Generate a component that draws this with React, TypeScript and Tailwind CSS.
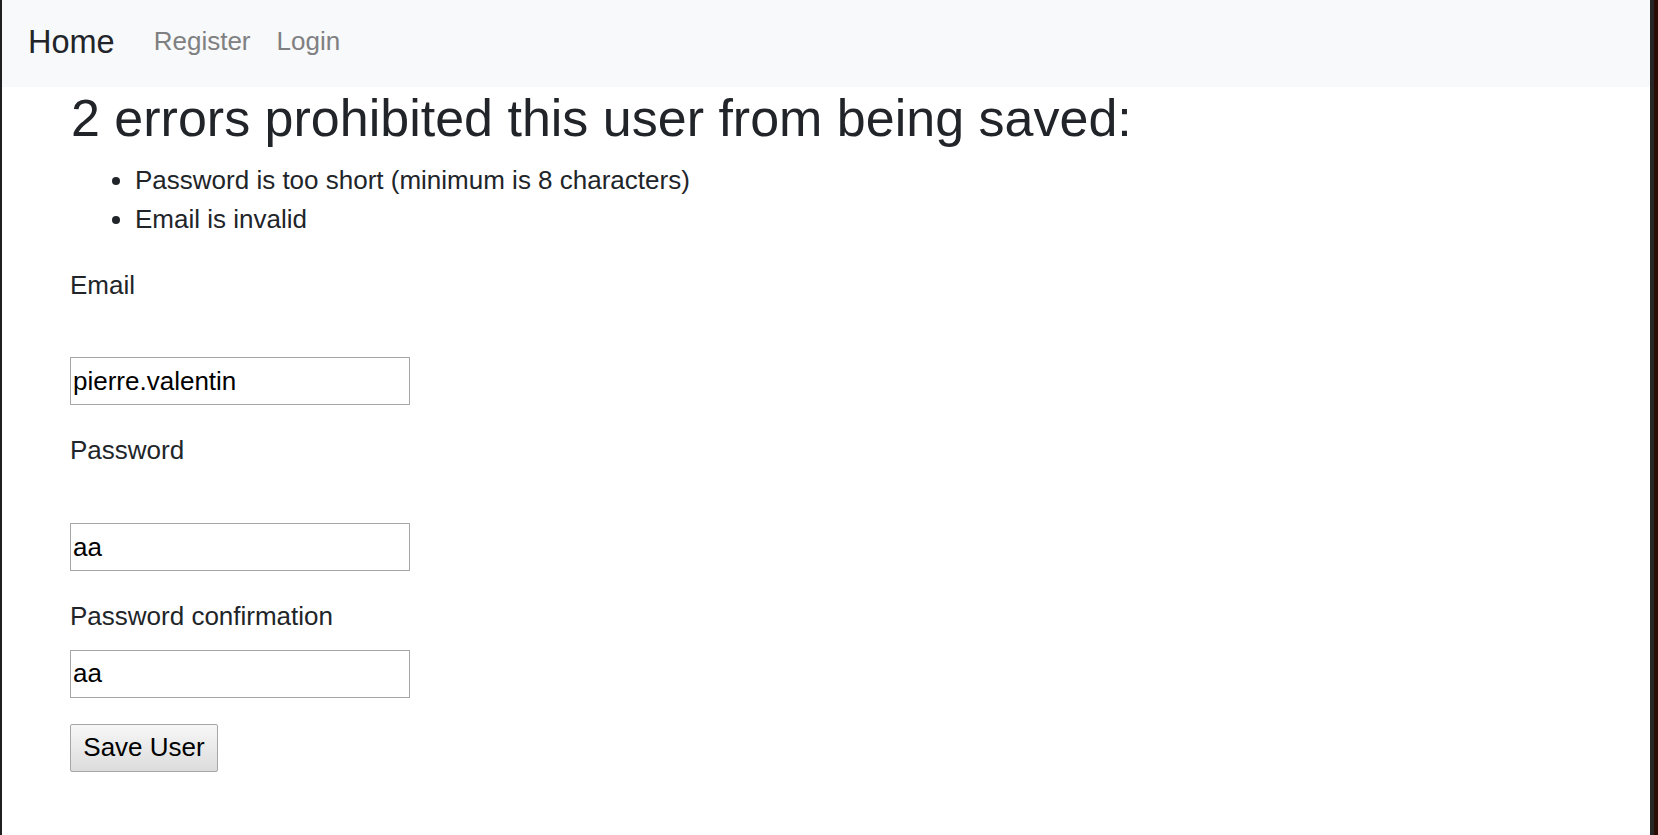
import React from 'react';

const fields = [
  { label: 'Email', value: 'pierre.valentin', error: true },
  { label: 'Password', value: 'aa', error: true },
  { label: 'Password confirmation', value: 'aa', error: false },
];

const errors = ['Password is too short (minimum is 8 characters)', 'Email is invalid'];

const App = () => {
  return (
    <div className="flex h-[835px] w-full font-['Liberation_Sans',Arial,sans-serif] text-[#212529]">
      {/* window edge */}
      <div className="w-[2px] bg-[#1f1f1f]" />

      <div className="flex-1 bg-white">
        {/* Navbar */}
        <nav className="flex h-[87px] items-center bg-[#f8f9fa] px-[26px]">
          <a className="mb-[3px] mr-[26px] text-[32.5px] leading-[48px] text-[#212529]">Home</a>
          <a className="mb-[5px] px-[13px] text-[26px] leading-[39px] text-[#7f8081]">Register</a>
          <a className="mb-[5px] px-[13px] text-[26px] leading-[39px] text-[#7f8081]">Login</a>
        </nav>

        <div className="pl-[68px]">
          <h2 className="mb-[11.5px] pl-[1px] text-[52px] font-normal leading-[1.2]">
            2 errors prohibited this user from being saved:
          </h2>
          <ul className="mb-[27px] list-disc pl-[65px] text-[26px] leading-[39px]">
            {errors.map((e) => (
              <li key={e}>{e}</li>
            ))}
          </ul>

          {/* Form */}
          <form className="flex flex-col items-start text-[26px]">
            {fields.map((f) => (
              <div key={f.label} className="mb-[26px] flex flex-col items-start">
                <label className="leading-[39px]">{f.label}</label>
                <input
                  type="text"
                  defaultValue={f.value}
                  className={`${f.error ? 'mt-[52.6px]' : 'mt-[13.8px]'} h-[48px] w-[340px] border border-[#a6a6a6] bg-white px-[2px] text-[26px] text-black outline-none`}
                />
              </div>
            ))}
            <button
              type="button"
              className="h-[48px] w-[148px] rounded-[2px] border border-[#a6a6a6] bg-gradient-to-b from-[#f7f7f7] to-[#dcdcdc] text-[26px] text-black"
            >
              Save User
            </button>
          </form>
        </div>
      </div>

      {/* right edge */}
      <div className="w-[4px] bg-[#262626]" />
      <div className="w-[4px] bg-[#2a0c04]" />
    </div>
  );
};

export default App;
